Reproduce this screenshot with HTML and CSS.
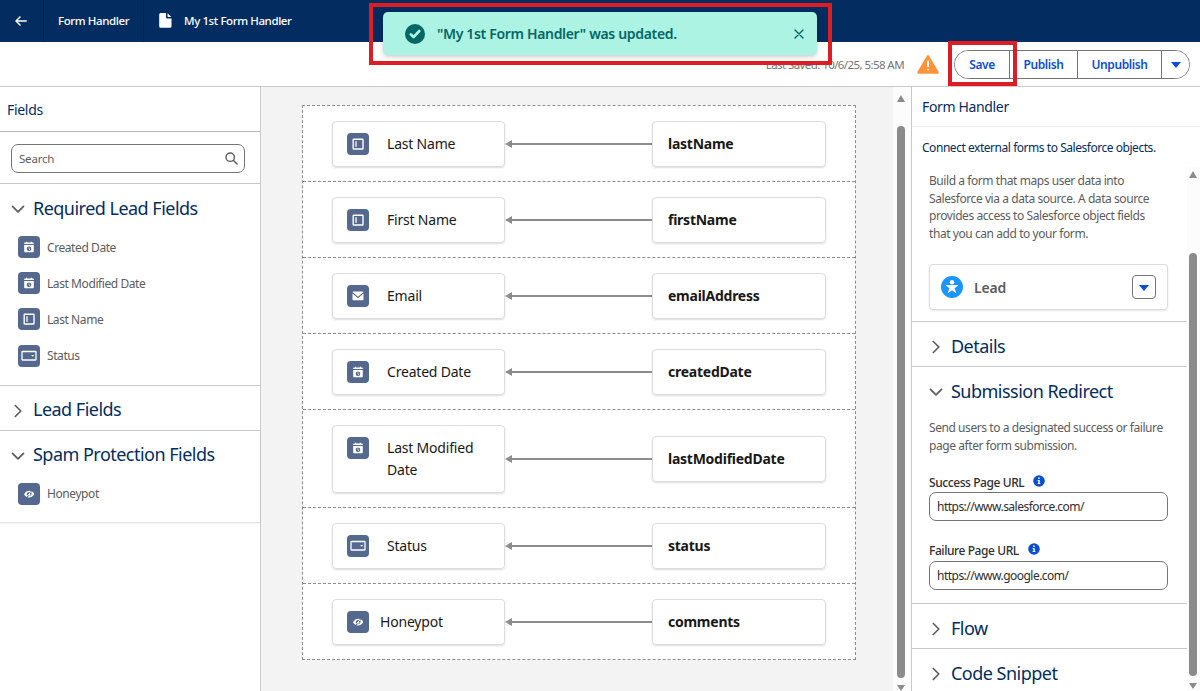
FILE: index.html
```html
<!DOCTYPE html>
<html lang="en">
<head>
  <meta charset="UTF-8">
  <meta name="viewport" content="width=device-width, initial-scale=1.0">
  <title>My 1st Form Handler</title>
  <link rel="stylesheet" href="styles.css">
</head>
<body>
  <!-- Icon set -->
  <svg class="icon-defs">
    <symbol id="i-date" viewBox="0 0 22 22">
      <path fill="#fff" d="M6.200 8.100V7.200q0-.7.700-.7H8V5.800h1.300v.7h3.400v-.7H14v.7h1.100q.7 0 .7.700v.9z"/>
      <path fill="#fff" fill-rule="evenodd" d="M6.200 9h9.600v6.500q0 .8-.8.800H7q-.8 0-.8-.8zM11 10.400a2.300 2.300 0 1 0 0 4.600a2.300 2.300 0 0 0 0-4.600z"/>
      <path fill="none" stroke="#fff" stroke-width=".8" d="M11 11.400v1.500l1 .8"/>
    </symbol>
    <symbol id="i-text" viewBox="0 0 22 22">
      <rect x="6.200" y="6.200" width="9.800" height="9.800" rx=".6" fill="none" stroke="#fff" stroke-width="1.400"/>
      <path stroke="#fff" stroke-width="1.300" d="M9 8.300v5.500"/>
    </symbol>
    <symbol id="i-picklist" viewBox="0 0 22 22">
      <rect x="4" y="6.500" width="14" height="8.500" rx=".5" fill="none" stroke="#fff" stroke-width="1.300"/>
      <path fill="#fff" d="M13.200 10h3l-1.500 1.800z"/>
    </symbol>
    <symbol id="i-email" viewBox="0 0 22 22">
      <path fill="#fff" d="M6.500 6.500h9q.8 0 1 .6L11 11.800 5.500 7.100q.2-.6 1-.6z"/>
      <path fill="#fff" d="M5.500 8.500L11 13.200l5.500-4.700v5.800q0 1-1 1h-9q-1 0-1-1z"/>
    </symbol>
    <symbol id="i-hidden" viewBox="0 0 22 22">
      <path fill="#fff" d="M6 11.200Q8 7.800 11.600 7.800q.8 0 1.200.2l-.8 1.100q-2.800-.5-3.300 2 0 1.200.6 1.900l-.7 1Q7 13 6 11.200z"/>
      <path fill="#fff" d="M14 8.500q1.500.9 2.300 2.600Q14.500 14.500 11 14.500q-.8 0-1.500-.2l.8-1.100q2.900.3 3.300-2.200 0-.9-.4-1.500z"/>
      <path stroke="#fff" stroke-width="1" d="M9.500 13l3.500-4.500"/>
      <circle cx="11.500" cy="11.700" r="1" fill="#fff"/>
    </symbol>
    <symbol id="i-down" viewBox="0 0 14 14">
      <path fill="none" stroke="#5c5c5c" stroke-width="1.700" stroke-linecap="round" stroke-linejoin="round" d="M1.500 4.300L7 9.800l5.500-5.500"/>
    </symbol>
    <symbol id="i-right" viewBox="0 0 14 14">
      <path fill="none" stroke="#5c5c5c" stroke-width="1.700" stroke-linecap="round" stroke-linejoin="round" d="M4.300 1.500L9.800 7l-5.500 5.500"/>
    </symbol>
    <symbol id="i-info" viewBox="0 0 12 12">
      <circle cx="6" cy="6" r="5.800" fill="#0b4fd0"/>
      <path fill="#fff" d="M5.200 2.600h1.500v1.500H5.200zM4.700 5h2v3h.6v.9H4.700V8h.6V5.900h-.6z"/>
    </symbol>
  </svg>

  <header class="navbar">
    <a class="nav-back">
      <svg width="12" height="10" viewBox="0 0 12 10"><path fill="none" stroke="#fff" stroke-width="1.500" stroke-linecap="round" stroke-linejoin="round" d="M11.200 5H1M5 1L1 5l4 4"/></svg>
    </a>
    <a class="nav-app">Form Handler</a>
    <a class="nav-record">
      <svg width="13" height="15" viewBox="0 0 13 15"><path fill="#fff" d="M1.600 0H7v4.300q0 1.200 1.200 1.200H12.500v7.700q0 1.500-1.500 1.500H1.600Q.2 14.700.2 13.200V1.500Q.2 0 1.600 0zM8.500.3l3.800 3.600H9.200q-.7 0-.7-.7z"/></svg>
      <span>My 1st Form Handler</span>
    </a>
  </header>

  <div class="toolbar">
    <span class="last-saved">Last Saved: 10/6/25, 5:58 AM</span>
    <svg class="warning" width="22" height="19" viewBox="0 0 22 19"><path fill="#fe9339" d="M9.900.8q1.100-1.500 2.200 0l9.400 16q.7 1.700-1 1.900H1.500q-1.700-.2-1-1.900z"/><path stroke="#fff" stroke-width="1.900" stroke-linecap="round" d="M11 6.300v5M11 14.700v.1"/></svg>
    <div class="button-group">
      <button class="btn-save">Save</button>
      <button class="btn-publish">Publish</button>
      <button class="btn-unpublish">Unpublish</button>
      <button class="btn-more"><span class="caret"></span></button>
    </div>
  </div>

  <main class="builder">
    <!-- Fields palette -->
    <aside class="fields-panel">
      <h2 class="panel-title">Fields</h2>
      <div class="search-wrap">
        <div class="search">
          <span>Search</span>
          <svg width="13" height="13" viewBox="0 0 13 13"><circle cx="5.200" cy="5.200" r="4.200" fill="none" stroke="#5c5c5c" stroke-width="1.400"/><path stroke="#5c5c5c" stroke-width="1.500" stroke-linecap="round" d="M8.500 8.500l3.500 3.500"/></svg>
        </div>
      </div>
      <section class="group">
        <h3><svg class="chevron"><use href="#i-down"/></svg>Required Lead Fields</h3>
        <ul>
          <li><svg class="field-icon"><use href="#i-date"/></svg>Created Date</li>
          <li><svg class="field-icon"><use href="#i-date"/></svg>Last Modified Date</li>
          <li><svg class="field-icon"><use href="#i-text"/></svg>Last Name</li>
          <li><svg class="field-icon"><use href="#i-picklist"/></svg>Status</li>
        </ul>
      </section>
      <section class="group">
        <h3><svg class="chevron"><use href="#i-right"/></svg>Lead Fields</h3>
      </section>
      <section class="group last">
        <h3><svg class="chevron"><use href="#i-down"/></svg>Spam Protection Fields</h3>
        <ul>
          <li><svg class="field-icon"><use href="#i-hidden"/></svg>Honeypot</li>
        </ul>
      </section>
    </aside>

    <!-- Mapping canvas -->
    <section class="canvas">
      <div class="mapping">
        <div class="row">
          <div class="card"><svg class="field-icon"><use href="#i-text"/></svg><span>Last Name</span></div>
          <div class="arrow"></div>
          <div class="card source">lastName</div>
        </div>
        <div class="row">
          <div class="card"><svg class="field-icon"><use href="#i-text"/></svg><span>First Name</span></div>
          <div class="arrow"></div>
          <div class="card source">firstName</div>
        </div>
        <div class="row">
          <div class="card"><svg class="field-icon"><use href="#i-email"/></svg><span>Email</span></div>
          <div class="arrow"></div>
          <div class="card source">emailAddress</div>
        </div>
        <div class="row">
          <div class="card"><svg class="field-icon"><use href="#i-date"/></svg><span>Created Date</span></div>
          <div class="arrow"></div>
          <div class="card source">createdDate</div>
        </div>
        <div class="row">
          <div class="card"><svg class="field-icon"><use href="#i-date"/></svg><span>Last Modified Date</span></div>
          <div class="arrow"></div>
          <div class="card source">lastModifiedDate</div>
        </div>
        <div class="row">
          <div class="card"><svg class="field-icon"><use href="#i-picklist"/></svg><span>Status</span></div>
          <div class="arrow"></div>
          <div class="card source">status</div>
        </div>
        <div class="row">
          <div class="card narrow"><svg class="field-icon"><use href="#i-hidden"/></svg><span>Honeypot</span></div>
          <div class="arrow"></div>
          <div class="card source">comments</div>
        </div>
      </div>
    </section>
    <div class="scrollbar canvas-scroll">
      <i class="up"></i>
      <i class="thumb"></i>
      <i class="down"></i>
    </div>

    <!-- Properties -->
    <aside class="props-panel">
      <h2 class="props-title">Form Handler</h2>
      <p class="props-intro">Connect external forms to Salesforce objects.</p>
      <div class="props-body">
        <div class="props-content">
          <div class="source-block">
            <p>Build a form that maps user data into<br>Salesforce via a data source. A data source<br>provides access to Salesforce object fields<br>that you can add to your form.</p>
            <div class="object">
              <svg width="22" height="22" viewBox="0 0 22 22"><circle cx="11" cy="11" r="11" fill="#1b96ff"/><circle cx="11" cy="6.300" r="2.200" fill="#fff"/><path fill="#fff" d="M5.400 9h11.200q.6.300.1.800L13.600 12.200l1.500 4.200q0 .7-.7.400L11 14.300 7.600 16.800q-.7.300-.7-.4l1.500-4.200L5.300 9.800Q4.800 9.300 5.400 9z"/></svg>
              <span>Lead</span>
              <button><span class="caret"></span></button>
            </div>
          </div>
          <section class="prop"><h3><svg class="chevron"><use href="#i-right"/></svg>Details</h3></section>
          <section class="prop">
            <h3><svg class="chevron"><use href="#i-down"/></svg>Submission Redirect</h3>
            <div class="redirect">
              <p>Send users to a designated success or failure<br>page after form submission.</p>
              <label>Success Page URL <svg class="info"><use href="#i-info"/></svg></label>
              <input type="text" value="https://www.salesforce.com/">
              <label>Failure Page URL <svg class="info"><use href="#i-info"/></svg></label>
              <input type="text" value="https://www.google.com/">
            </div>
          </section>
          <section class="prop"><h3><svg class="chevron"><use href="#i-right"/></svg>Flow</h3></section>
          <section class="prop"><h3><svg class="chevron"><use href="#i-right"/></svg>Code Snippet</h3></section>
        </div>
        <div class="scrollbar props-scroll">
          <i class="up"></i>
          <i class="thumb"></i>
          <i class="down"></i>
        </div>
      </div>
    </aside>
  </main>

  <div class="toast">
    <svg width="20" height="20" viewBox="0 0 20 20"><circle cx="10" cy="10" r="10" fill="#056764"/><path fill="none" stroke="#acf3e4" stroke-width="2.600" stroke-linecap="round" stroke-linejoin="round" d="M5.700 10.300l2.900 2.700 5.700-6"/></svg>
    <span>"My 1st Form Handler" was updated.</span>
    <svg class="close" width="10" height="10" viewBox="0 0 10 10"><path stroke="#056764" stroke-width="1.400" stroke-linecap="round" d="M1 1l8 8M9 1L1 9"/></svg>
  </div>
  <div class="highlight highlight-toast"></div>
  <div class="highlight highlight-save"></div>
</body>
</html>
```
FILE: styles.css
```css
* {
  box-sizing: border-box;
}
body {
  margin: 0;
  width: 1200px;
  height: 691px;
  overflow: hidden;
  background: #fff;
  font-family: "Noto Sans", "Open Sans", sans-serif;
  font-size: 12px;
  color: #5c5c5c;
}
h2, h3, p, ul {
  margin: 0;
  padding: 0;
  font-weight: 400;
}
button {
  padding: 0;
  background: #fff;
  font-family: inherit;
}
.icon-defs {
  display: none;
}

/* top bar */
.navbar {
  display: flex;
  height: 42px;
  background: #032d60;
  color: #fff;
  font-size: 11.5px;
  font-weight: 500;
  letter-spacing: -0.4px;
}
.navbar a {
  display: flex;
  align-items: center;
  height: 42px;
  padding-bottom: 1px;
}
.nav-back {
  width: 44px;
  padding-left: 15px;
  border-right: 1px solid #02244e;
}
.nav-app {
  width: 100px;
  padding-left: 14px;
  border-right: 1px solid #02244e;
}
.nav-record {
  padding-left: 15px;
  gap: 12px;
}
.toolbar {
  display: flex;
  align-items: center;
  justify-content: flex-end;
  height: 45px;
  padding-right: 10px;
  border-bottom: 1px solid #c9c9c9;
}
.last-saved {
  color: #747474;
  font-size: 11.5px;
  letter-spacing: -0.58px;
}
.warning {
  margin: 0 15px 0 13px;
}
.button-group {
  display: flex;
  width: 236px;
  height: 29px;
  border: 1px solid #747474;
  border-radius: 15px;
  overflow: hidden;
}
.button-group button {
  border: 0;
  border-right: 1px solid #747474;
  color: #0b4fd0;
  font-size: 12px;
  font-weight: 600;
  letter-spacing: -0.4px;
}
.button-group .btn-save {
  width: 55px;
}
.button-group .btn-publish {
  width: 68px;
}
.button-group .btn-unpublish {
  width: 84px;
}
.button-group .btn-more {
  flex: 1;
  border-right: 0;
}
.caret {
  display: inline-block;
  border: 5px solid transparent;
  border-top: 6px solid #0b4fd0;
  border-bottom: 0;
  vertical-align: middle;
}

.builder {
  display: flex;
  height: 604px;
}

/* left panel */
.fields-panel {
  width: 261px;
  border-right: 1px solid #c9c9c9;
}
.panel-title {
  height: 45px;
  padding-left: 7px;
  border-bottom: 1px solid #b8b8b8;
  color: #032d60;
  font-size: 14px;
  line-height: 45px;
  letter-spacing: -0.3px;
}
.search-wrap {
  height: 52px;
  padding: 12px 15px 0 11px;
  border-bottom: 1px solid #c9c9c9;
}
.search {
  display: flex;
  align-items: center;
  justify-content: space-between;
  height: 29px;
  padding: 0 6px 0 7px;
  border: 1px solid #747474;
  border-radius: 7px;
  font-size: 11.5px;
  letter-spacing: -0.2px;
}
.group {
  border-bottom: 1px solid #c9c9c9;
}
.group h3, .prop h3 {
  display: flex;
  align-items: center;
  height: 44px;
  padding-top: 3px;
  color: #032d60;
  font-size: 18px;
  letter-spacing: -0.52px;
}
.group h3 {
  padding-left: 11px;
}
.chevron {
  width: 14px;
  height: 14px;
  margin: 3px 8px 0 0;
}
.group ul {
  padding: 1px 0 11px;
  list-style: none;
}
.group li {
  display: flex;
  align-items: center;
  height: 36.2px;
  padding-left: 18px;
  letter-spacing: -0.42px;
}
.group li .field-icon {
  margin-right: 7px;
}
.group.last {
  border-bottom-color: #e5e5e5;
  box-shadow: 0 1px 2px rgba(0, 0, 0, 0.06);
}
.group.last ul {
  padding-bottom: 10px;
}
.field-icon {
  flex: none;
  width: 22px;
  height: 22px;
  border-radius: 4px;
  background: #54698d;
}

/* canvas */
.canvas {
  width: 632px;
  padding: 18px 37px 0 41px;
  background: #f3f3f3;
}
.mapping {
  border: 1px dashed #8c8c8c;
  background: #fff;
}
.row {
  display: flex;
  align-items: center;
  padding: 15px 29px 14px;
  border-bottom: 1px dashed #8c8c8c;
}
.row:last-child {
  border-bottom: 0;
}
.card {
  display: flex;
  align-items: flex-start;
  width: 173px;
  min-height: 46px;
  padding: 11px 12px 11px 14px;
  border: 1px solid #dcdcdc;
  border-radius: 4px;
  box-shadow: 0 1px 2px rgba(0, 0, 0, 0.14);
  color: #181818;
  font-size: 14px;
  line-height: 22px;
  letter-spacing: -0.2px;
}
.card span {
  padding-left: 18px;
}
.card.narrow span {
  padding-left: 11px;
}
.card.source {
  width: 174px;
  padding-left: 15px;
  font-weight: 700;
  letter-spacing: -0.25px;
}
.arrow {
  display: flex;
  align-items: center;
  flex: 1;
}
.arrow::before {
  content: "";
  border: 4px solid transparent;
  border-right: 7px solid #8c8c8c;
  border-left: 0;
}
.arrow::after {
  content: "";
  flex: 1;
  height: 2px;
  background: #8c8c8c;
}

.scrollbar {
  display: flex;
  flex-direction: column;
  align-items: center;
  background: #fcfcfc;
}
.scrollbar .up, .scrollbar .down {
  border: 4px solid transparent;
}
.scrollbar .up {
  border-top: 0;
  border-bottom: 7px solid #8b8b8b;
}
.scrollbar .down {
  border-bottom: 0;
  border-top: 6px solid #8b8b8b;
}
.scrollbar .thumb {
  width: 8px;
  border-radius: 4px;
  background: #8b8b8b;
}
.canvas-scroll {
  width: 18px;
  padding: 8px 2px 0 0;
}
.canvas-scroll .thumb {
  height: 555px;
  margin: 24px 0 7px;
}

/* right panel */
.props-panel {
  display: flex;
  flex-direction: column;
  width: 289px;
  border-left: 1px solid #c9c9c9;
}
.props-title {
  height: 40px;
  padding-left: 10px;
  border-bottom: 1px solid #ececec;
  color: #032d60;
  font-size: 14px;
  line-height: 39px;
  letter-spacing: -0.35px;
}
.props-intro {
  height: 40px;
  padding-left: 10px;
  color: #032d60;
  line-height: 41px;
  letter-spacing: -0.46px;
}
.props-body {
  display: flex;
  flex: 1;
  min-height: 0;
}
.props-content {
  width: 275px;
  overflow: hidden;
}
.props-content p {
  line-height: 17.5px;
  letter-spacing: -0.43px;
  white-space: nowrap;
}
.source-block {
  height: 155px;
  padding: 5px 19px 0 17px;
  border-bottom: 1px solid #c9c9c9;
}
.object {
  display: flex;
  align-items: center;
  height: 46px;
  margin-top: 22px;
  padding: 0 11px;
  border: 1px solid #dcdcdc;
  border-radius: 4px;
  box-shadow: 0 1px 2px rgba(0, 0, 0, 0.1);
  font-size: 14px;
  font-weight: 600;
  letter-spacing: -0.2px;
}
.object span {
  margin-left: 11px;
}
.object button {
  width: 24px;
  height: 24px;
  margin-left: auto;
  border: 1px solid #747474;
  border-radius: 4px;
}
.object .caret {
  margin: 0;
}
.prop {
  border-bottom: 1px solid #c9c9c9;
}
.prop h3 {
  padding-left: 17px;
}
.redirect {
  height: 192px;
  padding: 8px 19px 0 17px;
}
.redirect label {
  display: flex;
  align-items: center;
  height: 20px;
  margin-top: 18px;
  color: #2e2e2e;
  font-weight: 500;
  letter-spacing: -0.42px;
}
.info {
  width: 12px;
  height: 12px;
  margin: -2px 0 0 9px;
}
.redirect input {
  display: block;
  width: 100%;
  height: 29px;
  padding: 0 7px;
  border: 1px solid #747474;
  border-radius: 7px;
  color: #2e2e2e;
  font-family: inherit;
  font-size: 12px;
  letter-spacing: -0.52px;
}
.redirect input + label {
  margin: 19px 0 1px;
}
.props-scroll {
  width: 13px;
  padding: 4px 1px 0 0;
}
.props-scroll .thumb {
  height: 423px;
  margin: 75px 0 7px;
}

/* overlays */
.toast {
  position: absolute;
  top: 12px;
  left: 383px;
  display: flex;
  align-items: center;
  width: 434px;
  height: 43px;
  padding: 0 13px 0 22px;
  border-radius: 5px;
  background: #acf3e4;
  box-shadow: 0 2px 4px rgba(0, 0, 0, 0.2);
  color: #056764;
  font-size: 14px;
  font-weight: 600;
}
.toast span {
  margin-left: 12px;
  letter-spacing: -0.33px;
}
.toast .close {
  margin-left: auto;
}
.highlight {
  position: absolute;
  border: 4px solid #dd1c24;
}
.highlight-toast {
  top: 3px;
  left: 369px;
  width: 463px;
  height: 62px;
}
.highlight-save {
  top: 41px;
  left: 948px;
  width: 69px;
  height: 45px;
}
```
